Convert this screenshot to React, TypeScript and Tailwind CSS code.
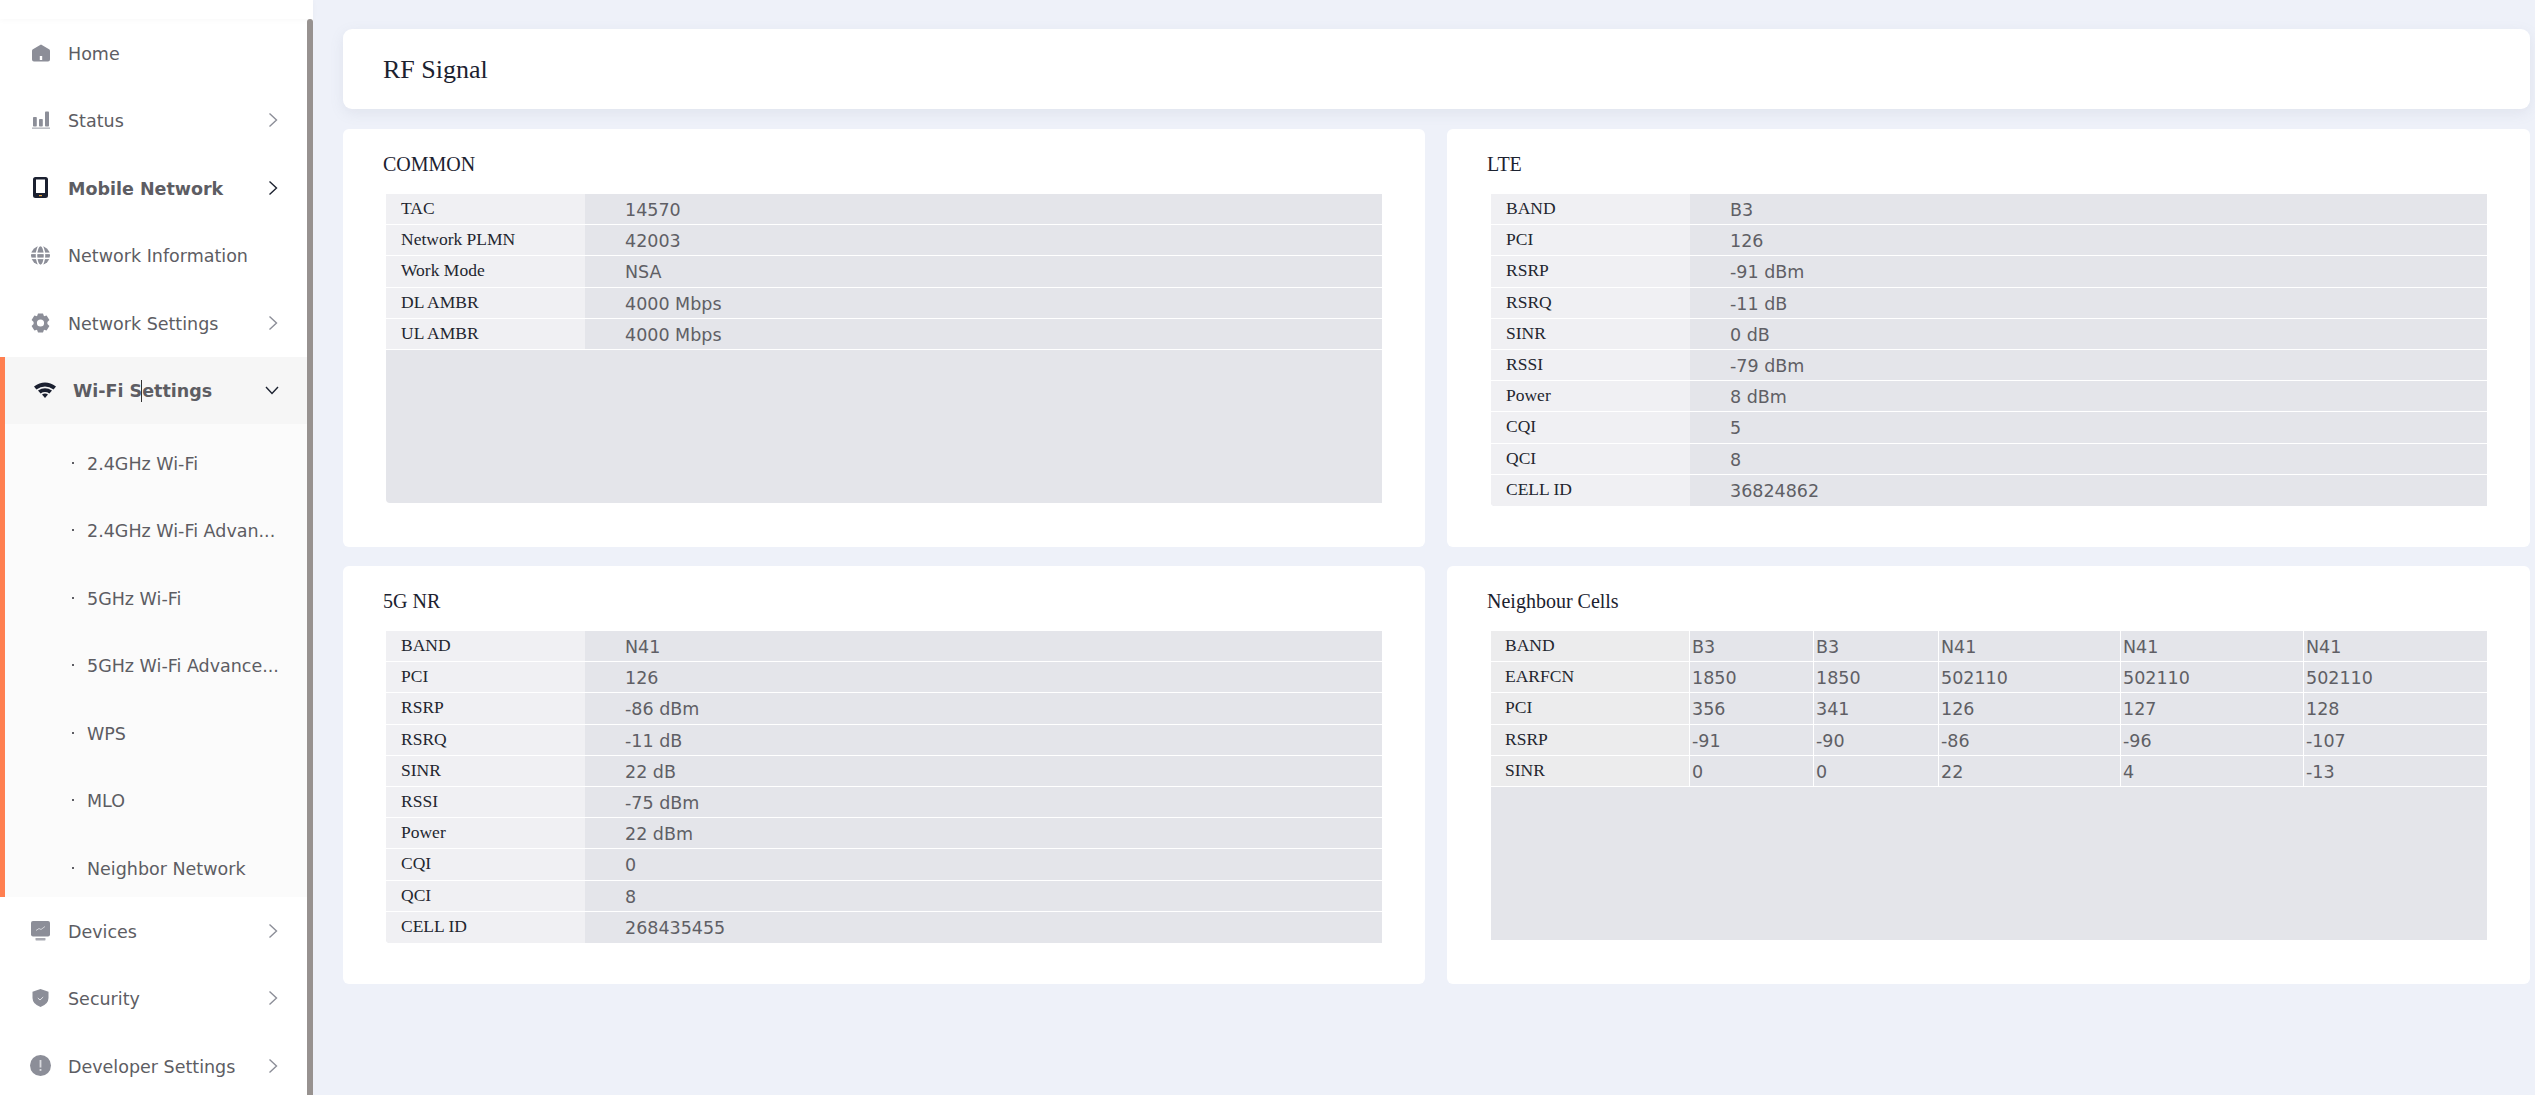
import React from "react";

const G = "#8c8e98";

function Chevron({ dark }: { dark?: boolean }) {
  return (
    <svg width="10" height="16" viewBox="0 0 10 16" fill="none" stroke={dark ? "#1c2230" : "#8c8e98"} strokeWidth="1.4" className="shrink-0">
      <polyline points="1.5,1.5 8.5,8 1.5,14.5" />
    </svg>
  );
}

const HomeIcon = () => (
  <svg width="18" height="18" viewBox="0 0 18 18">
    <path fill={G} fillRule="evenodd" d="M9 0.5 L17.5 5.5 Q18 6 18 7 V15.5 Q18 17.5 16 17.5 H2 Q0 17.5 0 15.5 V7 Q0 6 0.5 5.5 Z M7.8 12 V16 H10.2 V12 Z" />
  </svg>
);
const BarsIcon = () => (
  <svg width="18" height="18" viewBox="0 0 18 18">
    <g fill={G}>
      <rect x="1" y="6" width="3.8" height="9.5" rx="0.8" />
      <rect x="7" y="8" width="3.8" height="7.5" rx="0.8" />
      <rect x="13" y="0.5" width="4" height="15" rx="0.8" />
      <rect x="0" y="16.5" width="18" height="1.3" opacity="0.7" />
    </g>
  </svg>
);
const PhoneIcon = () => (
  <svg width="15" height="21" viewBox="0 0 15 21">
    <path fill="#1b2030" fillRule="evenodd" d="M2.5 0 H12.5 Q15 0 15 2.5 V18.5 Q15 21 12.5 21 H2.5 Q0 21 0 18.5 V2.5 Q0 0 2.5 0 Z M3 2.5 V16 H12 V2.5 Z" />
    <rect x="6" y="18" width="3" height="1.2" fill="#e8a23c" />
  </svg>
);
const GlobeIcon = () => (
  <svg width="19" height="19" viewBox="0 0 19 19">
    <circle cx="9.5" cy="9.5" r="9.5" fill={G} />
    <ellipse cx="9.5" cy="9.5" rx="4" ry="10" fill="none" stroke="#fff" strokeWidth="1.5" />
    <rect x="0" y="6.6" width="19" height="1.5" fill="#fff" />
    <rect x="0" y="11.6" width="19" height="1.5" fill="#fff" />
  </svg>
);
const GearIcon = () => (
  <svg width="19" height="20" viewBox="0 0 19 20">
    <path fill={G} fillRule="evenodd" d="M7 0.5 H12 L13 3.2 L15.6 2.4 L18.4 7 L16.4 9 V11 L18.4 13 L15.6 17.6 L13 16.8 L12 19.5 H7 L6 16.8 L3.4 17.6 L0.6 13 L2.6 11 V9 L0.6 7 L3.4 2.4 L6 3.2 Z M9.5 6.4 A3.6 3.6 0 1 0 9.5 13.6 A3.6 3.6 0 1 0 9.5 6.4 Z" />
  </svg>
);
const WifiIcon = () => (
  <svg width="22" height="16" viewBox="0 0 22 16">
    <path fill="#1b2030" d="M0 4.6 Q11 -3.4 22 4.6 L19.6 7.4 Q11 1.6 2.4 7.4 Z" />
    <path fill="#1b2030" d="M4 8.6 Q11 4 18 8.6 L15.4 11.4 Q11 8.8 6.6 11.4 Z" />
    <path fill="#1b2030" d="M8 12.4 Q11 10.8 14 12.4 L11 16 Z" />
  </svg>
);
const MonitorIcon = () => (
  <svg width="19" height="20" viewBox="0 0 19 20">
    <rect x="0" y="0" width="19" height="15.5" rx="2" fill={G} />
    <rect x="4.5" y="17" width="10" height="2.4" rx="0.6" fill={G} opacity="0.75" />
    <polyline points="5,9.5 8,7.5 10,8.5 14,5.5" fill="none" stroke="#d8d9de" strokeWidth="0.9" />
  </svg>
);
const ShieldIcon = () => (
  <svg width="17" height="18" viewBox="0 0 17 18">
    <path fill={G} d="M8.5 0 L16.5 2.8 V9 Q16.5 15 8.5 18 Q0.5 15 0.5 9 V2.8 Z" />
    <polyline points="5.8,9 8,11 11.2,8" fill="none" stroke="#e3e4e8" strokeWidth="1" />
  </svg>
);
const AlertIcon = () => (
  <svg width="21" height="21" viewBox="0 0 21 21">
    <circle cx="10.5" cy="10.5" r="10.5" fill={G} />
    <rect x="9.6" y="5" width="1.8" height="7.5" fill="#d9dade" />
    <rect x="9.6" y="14" width="1.8" height="1.9" fill="#d9dade" />
  </svg>
);

function NavRow({ icon, label, chevron = true, bold }: { icon: React.ReactNode; label: string; chevron?: boolean; bold?: boolean }) {
  return (
    <div className="flex h-[67.5px] items-center pl-[30px] pr-[29px]">
      <span className="flex w-[21px] shrink-0 justify-center">{icon}</span>
      <span className={`ml-[17px] pt-[2px] text-[#5d5d63] ${bold ? "font-bold" : ""}`}>{label}</span>
      {chevron && <span className="ml-auto flex"><Chevron dark={bold} /></span>}
    </div>
  );
}

const subs = ["2.4GHz Wi-Fi", "2.4GHz Wi-Fi Advan...", "5GHz Wi-Fi", "5GHz Wi-Fi Advance...", "WPS", "MLO", "Neighbor Network"];

function Sidebar() {
  return (
    <aside className="flex h-full w-[313px] shrink-0 flex-col bg-white font-['DejaVu_Sans',sans-serif] text-[17.5px]">
      <div className="h-[19px] shrink-0 bg-white shadow-[0_1px_6px_rgba(0,0,0,0.03)]" />
      <div className="flex min-h-0 flex-1">
        <nav className="w-[307px] shrink-0">
          <NavRow icon={<HomeIcon />} label="Home" chevron={false} />
          <NavRow icon={<BarsIcon />} label="Status" />
          <NavRow icon={<PhoneIcon />} label="Mobile Network" bold />
          <NavRow icon={<GlobeIcon />} label="Network Information" chevron={false} />
          <NavRow icon={<GearIcon />} label="Network Settings" />
          <div className="border-l-[5px] border-[#ff7f50]">
            <div className="flex h-[67.5px] items-center bg-[#f6f6f6] pl-[29px] pr-[28px]">
              <span className="flex w-[22px] shrink-0 justify-center"><WifiIcon /></span>
              <span className="ml-[17px] pt-[2px] font-bold text-[#5d5d63]">
                Wi-Fi S<span className="relative"><span className="absolute bottom-[-1px] left-[-1px] top-[-1px] w-px bg-[#333]" /></span>ettings
              </span>
              <svg width="14" height="9" viewBox="0 0 14 9" fill="none" stroke="#1c2230" strokeWidth="1.4" className="ml-auto">
                <polyline points="1,1 7,7.5 13,1" />
              </svg>
            </div>
            <div className="h-[473px] overflow-hidden bg-[#fbfbfb] pt-[5px]">
              {subs.map((s) => (
                <div key={s} className="flex h-[67.5px] items-center pl-[67px] pr-[20px]">
                  <span className="h-[2px] w-[2px] shrink-0 bg-[#5d5d63]" />
                  <span className="ml-[13px] whitespace-nowrap pt-[2px] text-[#5d5d63]">{s}</span>
                </div>
              ))}
            </div>
          </div>
          <NavRow icon={<MonitorIcon />} label="Devices" />
          <NavRow icon={<ShieldIcon />} label="Security" />
          <NavRow icon={<AlertIcon />} label="Developer Settings" />
        </nav>
        <div className="w-[6px] rounded-t-[3px] bg-[#979290]" />
      </div>
    </aside>
  );
}

function Card({ title, right, children }: { title: string; right?: boolean; children: React.ReactNode }) {
  return (
    <section className="h-[418px] rounded-[6px] bg-white px-[40px] pt-[20px]">
      <h2 className="h-[30px] text-[20px] leading-[30px] text-[#1c2230]">{title}</h2>
      <div className={`mt-[15px] pr-[3px] ${right ? "pl-[4px]" : "pl-[3px]"}`}>{children}</div>
    </section>
  );
}

function KV({ rows, fill }: { rows: [string, string][]; fill?: number }) {
  return (
    <div className="overflow-hidden rounded-bl-[4px] bg-[#e4e5ea]" style={fill ? { height: fill } : undefined}>
      {rows.map(([k, v], i) => (
        <div key={k} className={`flex h-[31.2px] ${i < rows.length - 1 || fill ? "border-b border-white" : ""}`}>
          <div className="w-[199px] shrink-0 bg-[#f0f0f3] pl-[15px] leading-[29px] text-[#23262f]">{k}</div>
          <div className="pl-[40px] font-['DejaVu_Sans',sans-serif] text-[17.5px] leading-[33px] text-[#5f5f65]">{v}</div>
        </div>
      ))}
    </div>
  );
}

const cols = ["w-[199px]", "w-[124px]", "w-[125px]", "w-[182px]", "w-[183px]", "flex-1"];

function Neighbour() {
  const rows: string[][] = [
    ["BAND", "B3", "B3", "N41", "N41", "N41"],
    ["EARFCN", "1850", "1850", "502110", "502110", "502110"],
    ["PCI", "356", "341", "126", "127", "128"],
    ["RSRP", "-91", "-90", "-86", "-96", "-107"],
    ["SINR", "0", "0", "22", "4", "-13"],
  ];
  return (
    <div className="h-[309px] bg-[#e4e5ea]">
      {rows.map((r) => (
        <div key={r[0]} className="flex h-[31.2px] border-b border-white">
          {r.map((c, i) =>
            i === 0 ? (
              <div key={i} className={`${cols[i]} shrink-0 border-r border-white bg-[#ececed] pl-[14px] leading-[29px] text-[#23262f]`}>{c}</div>
            ) : (
              <div key={i} className={`${cols[i]} ${i < 5 ? "shrink-0 border-r border-white" : ""} pl-[2px] font-['DejaVu_Sans',sans-serif] text-[17.5px] leading-[33px] text-[#5f5f65]`}>{c}</div>
            )
          )}
        </div>
      ))}
    </div>
  );
}

export default function App() {
  return (
    <div className="flex h-screen overflow-hidden bg-[#eef1f9] font-['Liberation_Serif',serif] text-[17.5px]">
      <Sidebar />
      <main className="min-w-0 flex-1 pl-[30px] pr-[5px] pt-[29px]">
        <header className="flex h-[80px] items-center rounded-[9px] bg-white pl-[40px] text-[26px] text-[#1c2230] shadow-[0_4px_14px_rgba(120,130,160,0.12)]">
          RF Signal
        </header>
        <div className="mt-[20px] grid grid-cols-[1082px_1083px] gap-x-[22px] gap-y-[19px]">
          <Card title="COMMON">
            <KV
              fill={309}
              rows={[
                ["TAC", "14570"],
                ["Network PLMN", "42003"],
                ["Work Mode", "NSA"],
                ["DL AMBR", "4000 Mbps"],
                ["UL AMBR", "4000 Mbps"],
              ]}
            />
          </Card>
          <Card title="LTE" right>
            <KV
              rows={[
                ["BAND", "B3"],
                ["PCI", "126"],
                ["RSRP", "-91 dBm"],
                ["RSRQ", "-11 dB"],
                ["SINR", "0 dB"],
                ["RSSI", "-79 dBm"],
                ["Power", "8 dBm"],
                ["CQI", "5"],
                ["QCI", "8"],
                ["CELL ID", "36824862"],
              ]}
            />
          </Card>
          <Card title="5G NR">
            <KV
              rows={[
                ["BAND", "N41"],
                ["PCI", "126"],
                ["RSRP", "-86 dBm"],
                ["RSRQ", "-11 dB"],
                ["SINR", "22 dB"],
                ["RSSI", "-75 dBm"],
                ["Power", "22 dBm"],
                ["CQI", "0"],
                ["QCI", "8"],
                ["CELL ID", "268435455"],
              ]}
            />
          </Card>
          <Card title="Neighbour Cells" right>
            <Neighbour />
          </Card>
        </div>
      </main>
    </div>
  );
}
